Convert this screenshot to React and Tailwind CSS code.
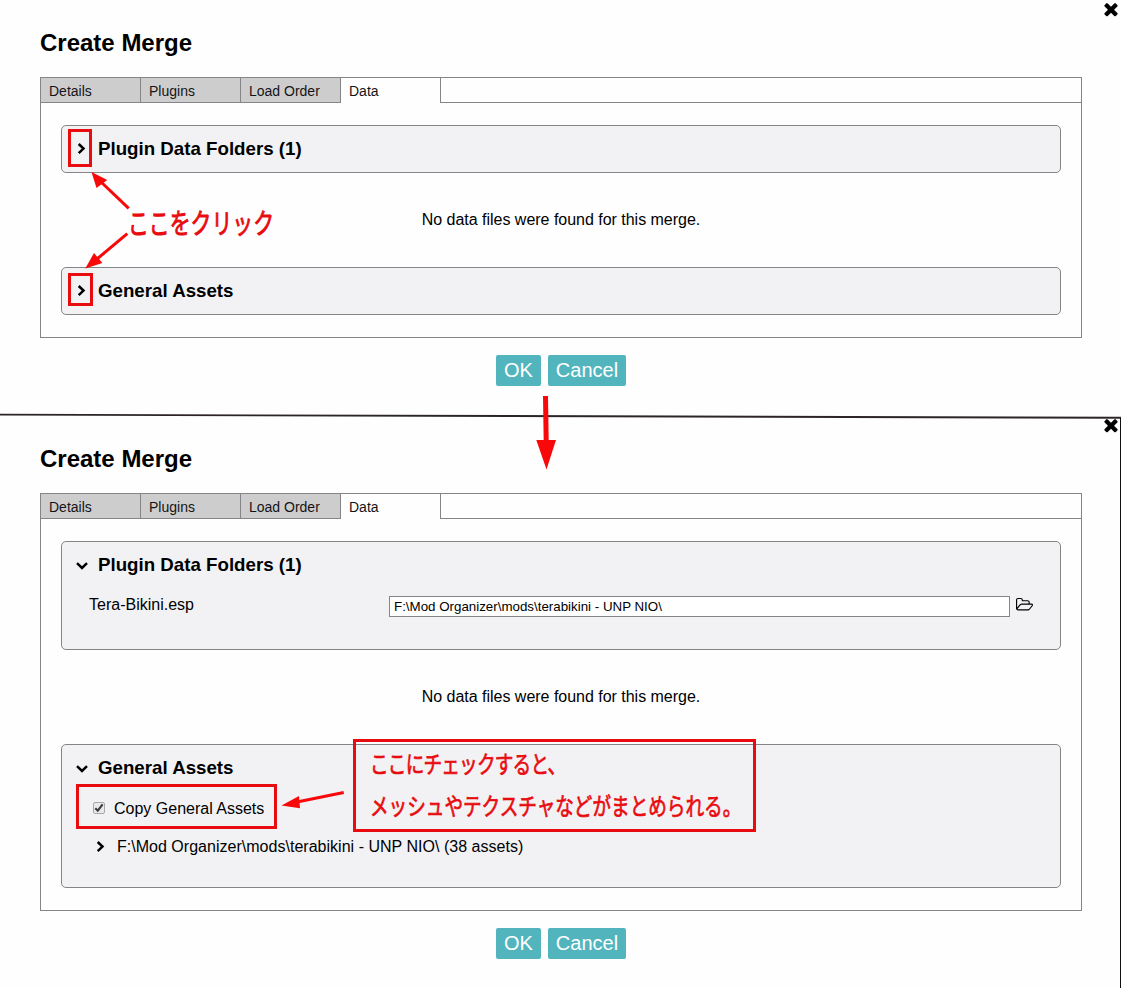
import React from 'react';

const TABS = ['Details', 'Plugins', 'Load Order', 'Data'];

function AngleRight({ className }) {
    return (
        <svg className={className} width="12" height="12" viewBox="0 0 12 12" fill="none" stroke="#000" strokeWidth="2.5">
            <path d="M2.7 1 7.5 5.6 2.7 10.2" />
        </svg>
    );
}

function AngleDown({ className }) {
    return (
        <svg className={className} width="12" height="12" viewBox="0 0 12 12" fill="none" stroke="#000" strokeWidth="2.5">
            <path d="M1 3.2 6 8 11 3.2" />
        </svg>
    );
}

function CloseIcon() {
    return (
        <svg width="20" height="20" viewBox="0 0 1792 1792">
            <path d="M1490 1322q0 40-28 68l-136 136q-28 28-68 28t-68-28l-294-294-294 294q-28 28-68 28t-68-28l-136-136q-28-28-28-68t28-68l294-294-294-294q-28-28-28-68t28-68l136-136q28-28 68-28t68 28l294 294 294-294q28-28 68-28t68 28l136 136q28 28 28 68t-28 68l-294 294 294 294q28 28 28 68z" />
        </svg>
    );
}

function FolderIcon() {
    return (
        <svg className="mb-[5px] ml-[6px]" width="18" height="16" viewBox="0 0 2016 1792">
            <path d="M1781 1013q0-35-53-35h-1088q-40 0-85.5 21.5t-71.5 52.5l-294 363q-18 24-18 40 0 35 53 35h1088q40 0 86-22t71-53l294-363q18-22 18-39zm-1141-163h768v-160q0-40-28-68t-68-28h-576q-40 0-68-28t-28-68v-64q0-40-28-68t-68-28h-320q-40 0-68 28t-28 68v853l256-315q44-53 116-87.5t140-34.5zm1269 163q0 62-46 120l-295 363q-43 53-116 87.5t-140 34.5h-1088q-92 0-158-66t-66-158v-960q0-92 66-158t158-66h320q92 0 158 66t66 158v32h544q92 0 158 66t66 158v160h192q54 0 99 24.5t67 70.5q15 32 15 68z" />
        </svg>
    );
}

function Section({ title, open, className = '', children }) {
    return (
        <div className={`rounded-[5px] border border-[#858587] bg-[#f2f2f4] ${className}`}>
            <div className="flex h-[46px] items-center gap-[10px] pl-[14px]">
                {open ? <AngleDown className="mt-[2px]" /> : <AngleRight />}
                <h3 className="pb-px text-[18.72px] font-bold leading-[22px]">{title}</h3>
            </div>
            {children}
        </div>
    );
}

function MergeDialog({ className, children }) {
    return (
        <div className={`relative pl-10 pr-[39px] pt-[29px] ${className}`}>
            <button className="absolute right-0 top-[-1px]">
                <CloseIcon />
            </button>
            <h1 className="text-2xl font-bold leading-7">Create Merge</h1>
            <div className="mt-5 border border-[#858587]">
                <div className="flex h-[25px] text-sm leading-[26px] text-[#141414]">
                    {TABS.map((tab) => (
                        <div
                            key={tab}
                            className={
                                tab === 'Data'
                                    ? 'w-[100px] border-r border-[#858587] pl-2'
                                    : 'w-[100px] border-b border-r border-[#858587] bg-[#cecdce] pl-2'
                            }
                        >
                            {tab}
                        </div>
                    ))}
                    <div className="flex-1 border-b border-[#858587]"></div>
                </div>
                <div className="px-5 py-[22px]">{children}</div>
            </div>
            <div className="mt-[17px] flex justify-center gap-[7px] text-xl text-white">
                <button className="h-[31px] w-[45px] rounded-[2px] bg-[#52b5bd] pb-px leading-[29px]">OK</button>
                <button className="h-[31px] w-[78px] rounded-[2px] bg-[#52b5bd] pb-px leading-[29px]">Cancel</button>
            </div>
        </div>
    );
}

function EmptyMessage() {
    return (
        <p className="flex h-[94px] items-center justify-center text-base tracking-[-0.02px]">
            No data files were found for this merge.
        </p>
    );
}

// Red arrows and the line between the two steps
function Arrows() {
    return (
        <svg className="pointer-events-none absolute left-0 top-0" width="1121" height="988" viewBox="0 0 1121 988">
            <path d="M0 414.6 1121 417.8" stroke="#2b2529" strokeWidth="1.9" />
            <path d="M1120.5 418V988" stroke="#111" strokeWidth="1" />
            <g stroke="#f80808" strokeWidth="3">
                <path d="M100 181 128.7 208.3" />
                <path d="M97 259 127.3 233.7" />
                <path d="M297 802 343.7 792.5" />
                <path d="M545.5 396 546.2 442" strokeWidth="5" />
            </g>
            <g fill="#f80808">
                <path d="M91.5 172 107.3 180 96.5 188Z" />
                <path d="M85.3 268.5 94 253 102.4 263Z" />
                <path d="M281.5 805.5 299 796 300 808.2Z" />
                <path d="M536.3 440H556L546.5 469.5Z" />
            </g>
        </svg>
    );
}

export default function App() {
    return (
        <div className="relative h-[988px] w-[1121px] overflow-hidden bg-[#fefefe] font-['Liberation_Sans',Arial,sans-serif] text-black">
            <MergeDialog className="h-[416px]">
                <Section title="Plugin Data Folders (1)" />
                <EmptyMessage />
                <Section title="General Assets" />
            </MergeDialog>

            <MergeDialog className="h-[572px]">
                <Section title="Plugin Data Folders (1)" open className="h-[109px]">
                    <div className="flex items-center pl-[27px] pt-[8px]">
                        <span className="w-[300px] pb-[3px] leading-[18px]">Tera-Bikini.esp</span>
                        <input
                            className="h-[21px] w-[621px] border border-[#858587] bg-white px-1 text-[13.333px]"
                            defaultValue={'F:\\Mod Organizer\\mods\\terabikini - UNP NIO\\'}
                        />
                        <FolderIcon />
                    </div>
                </Section>
                <EmptyMessage />
                <Section title="General Assets" open className="h-[144px]">
                    <div className="mt-[7px] flex h-[20px] items-center pl-[31px]">
                        <span className="flex h-[12px] w-[12px] items-center justify-center rounded-[2px] border border-[#a9a9a9] bg-[#e9e9e9]">
                            <svg width="10" height="10" viewBox="0 0 10 10" fill="none" stroke="#3a3a3a" strokeWidth="2.1">
                                <path d="M1.3 5.2 3.8 7.7 8.6 1.3" />
                            </svg>
                        </span>
                        <label className="pl-[9px] pt-[2px] leading-[20px]">Copy General Assets</label>
                    </div>
                    <div className="mt-[19px] flex h-[20px] items-center pl-[33px]">
                        <AngleRight />
                        <span className="pl-[10px] leading-[20px] tracking-[0.02px]">F:\Mod Organizer\mods\terabikini - UNP NIO\ (38 assets)</span>
                    </div>
                </Section>
            </MergeDialog>

            <Arrows />
            <div className="absolute left-[68px] top-[129px] h-[38px] w-[24px] border-3 border-[#e80c10]"></div>
            <div className="absolute left-[68px] top-[273px] h-[33px] w-[25px] border-3 border-[#e80c10]"></div>
            <div className="absolute left-[76px] top-[784px] h-[45px] w-[201px] border-3 border-[#e80c10]"></div>
            <div className="absolute left-[353px] top-[739px] h-[93px] w-[403px] border-3 border-[#e80c10]"></div>
            <div className="absolute left-[128px] top-[202px] origin-left scale-x-[0.745] whitespace-nowrap font-['Noto_Sans_CJK_JP',sans-serif] text-[28px] font-normal leading-[40px] text-[#e80c10] [-webkit-text-stroke:0.9px_#e80c10]">
                ここをクリック
            </div>
            <div className="absolute left-[370px] top-[742px] origin-left scale-x-[0.775] whitespace-nowrap font-['Noto_Sans_CJK_JP',sans-serif] text-[24px] font-normal leading-[42px] text-[#e80c10] [-webkit-text-stroke:0.7px_#e80c10]">
                <p className="tracking-[-1px]">ここにチェックすると、</p>
                <p>メッシュやテクスチャなどがまとめられる。</p>
            </div>
        </div>
    );
}
